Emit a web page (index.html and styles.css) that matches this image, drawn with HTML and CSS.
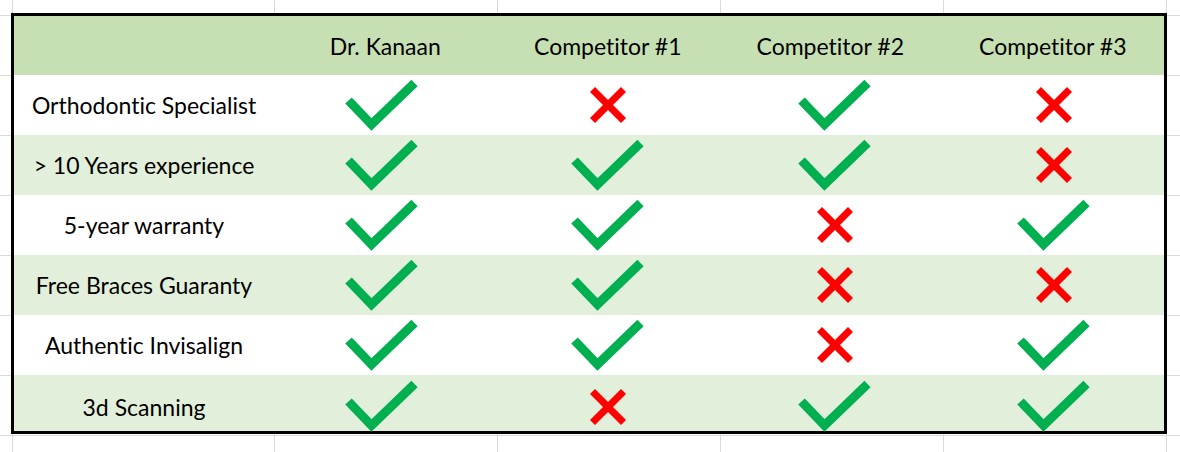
FILE: index.html
```html
<!DOCTYPE html>
<html lang="en">
<head>
<meta charset="utf-8">
<title>Comparison</title>
<link rel="stylesheet" href="styles.css">
</head>
<body>
<svg class="defs" width="0" height="0" aria-hidden="true">
  <defs>
    <symbol id="check" viewBox="0 0 76 53">
      <polyline points="4.5,21.5 27.5,45.5 70.5,4" fill="none" stroke="#00b050" stroke-width="9" stroke-linejoin="miter" stroke-linecap="butt"/>
    </symbol>
    <symbol id="cross" viewBox="0 0 38 38">
      <line x1="3.5" y1="3.5" x2="34.5" y2="34.5" stroke="#ff0000" stroke-width="7"/>
      <line x1="34.5" y1="3.5" x2="3.5" y2="34.5" stroke="#ff0000" stroke-width="7"/>
    </symbol>
  </defs>
</svg>
<div class="sheet">
  <div class="table">
    <div class="row head">
      <div class="cell"></div>
      <div class="cell">Dr. Kanaan</div>
      <div class="cell">Competitor #1</div>
      <div class="cell">Competitor #2</div>
      <div class="cell">Competitor #3</div>
    </div>
    <div class="row">
      <div class="cell">Orthodontic Specialist</div>
      <div class="cell c-dr"><svg class="ok"><use href="#check"/></svg></div>
      <div class="cell c-1"><svg class="no"><use href="#cross"/></svg></div>
      <div class="cell c-2"><svg class="ok"><use href="#check"/></svg></div>
      <div class="cell c-3"><svg class="no"><use href="#cross"/></svg></div>
    </div>
    <div class="row alt">
      <div class="cell">&gt; 10 Years experience</div>
      <div class="cell c-dr"><svg class="ok"><use href="#check"/></svg></div>
      <div class="cell c-1"><svg class="ok"><use href="#check"/></svg></div>
      <div class="cell c-2"><svg class="ok"><use href="#check"/></svg></div>
      <div class="cell c-3"><svg class="no"><use href="#cross"/></svg></div>
    </div>
    <div class="row">
      <div class="cell">5-year warranty</div>
      <div class="cell c-dr"><svg class="ok"><use href="#check"/></svg></div>
      <div class="cell c-1"><svg class="ok"><use href="#check"/></svg></div>
      <div class="cell c-2"><svg class="no"><use href="#cross"/></svg></div>
      <div class="cell c-3"><svg class="ok"><use href="#check"/></svg></div>
    </div>
    <div class="row alt">
      <div class="cell">Free Braces Guaranty</div>
      <div class="cell c-dr"><svg class="ok"><use href="#check"/></svg></div>
      <div class="cell c-1"><svg class="ok"><use href="#check"/></svg></div>
      <div class="cell c-2"><svg class="no"><use href="#cross"/></svg></div>
      <div class="cell c-3"><svg class="no"><use href="#cross"/></svg></div>
    </div>
    <div class="row">
      <div class="cell">Authentic Invisalign</div>
      <div class="cell c-dr"><svg class="ok"><use href="#check"/></svg></div>
      <div class="cell c-1"><svg class="ok"><use href="#check"/></svg></div>
      <div class="cell c-2"><svg class="no"><use href="#cross"/></svg></div>
      <div class="cell c-3"><svg class="ok"><use href="#check"/></svg></div>
    </div>
    <div class="row alt last">
      <div class="cell">3d Scanning</div>
      <div class="cell c-dr"><svg class="ok"><use href="#check"/></svg></div>
      <div class="cell c-1"><svg class="no"><use href="#cross"/></svg></div>
      <div class="cell c-2"><svg class="ok"><use href="#check"/></svg></div>
      <div class="cell c-3"><svg class="ok"><use href="#check"/></svg></div>
    </div>
  </div>
</div>
</body>
</html>
```
FILE: styles.css
```css
html, body {
  margin: 0;
  padding: 0;
}
body {
  width: 1180px;
  height: 452px;
  overflow: hidden;
  background-color: #ffffff;
  background-image:
    repeating-linear-gradient(to bottom, transparent 0 15px, #dadada 15px 16px, transparent 16px 60px),
    repeating-linear-gradient(to right, #dadada 0 1px, transparent 1px 223px),
    linear-gradient(to right, #dadada 0 1px, transparent 1px);
  background-repeat: no-repeat;
  background-position: 0 0, 274px 0, 12px 0;
  background-size: 100% 100%, 906px 100%, 1px 100%;
  font-family: Lato, "Open Sans", sans-serif;
  font-variant-ligatures: none;
  color: #000;
}
.defs {
  position: absolute;
  width: 0;
  height: 0;
}
.sheet {
  padding: 13px 0 0 11px;
}
.table {
  width: 1150px;
  border: 3px solid #000;
  background: #fff;
}
.row {
  display: grid;
  grid-template-columns: 260px repeat(4, 222.5px);
  height: 60px;
}
.row.head {
  height: 59px;
  background: #c6e0b4;
}
.row.alt {
  background: #e2efda;
}
.row.last {
  height: 56px;
  padding-top: 5px;
  box-sizing: border-box;
}
.cell {
  display: flex;
  align-items: center;
  justify-content: center;
  font-size: 23px;
  white-space: nowrap;
}
.c-dr { padding-right: 6px; }
.c-2 { padding-left: 9px; }
.c-3 { padding-left: 2px; }
.ok {
  width: 76px;
  height: 53px;
  display: block;
}
.no {
  width: 38px;
  height: 38px;
  display: block;
}
```
